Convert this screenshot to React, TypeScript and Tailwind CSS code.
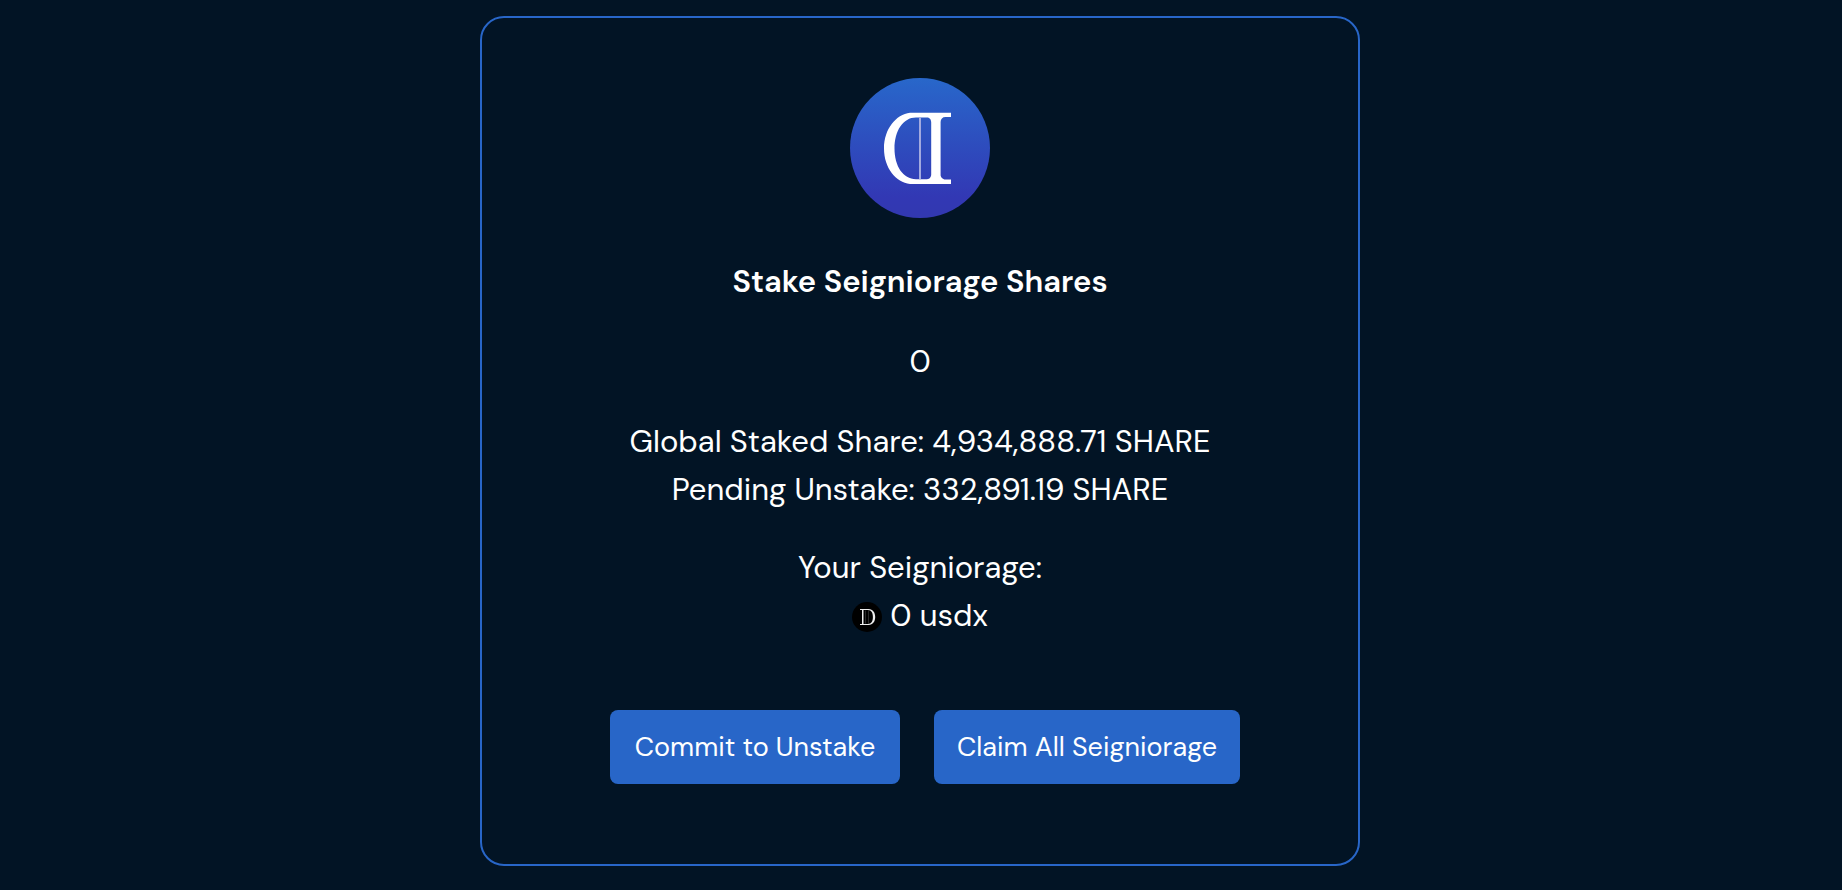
function ShareLogo() {
  return (
    <svg viewBox="0 0 140 140" className="size-[140px]" role="img" aria-label="Share">
      <defs>
        <linearGradient id="share-fill" x1="0" y1="0" x2="0" y2="1">
          <stop offset="0" stopColor="#2867ca" />
          <stop offset="0.85" stopColor="#3238b4" />
          <stop offset="1" stopColor="#3238b0" />
        </linearGradient>
      </defs>
      <circle cx="70" cy="70" r="70" fill="url(#share-fill)" />
      <path
        fill="#fff"
        fillRule="evenodd"
        d="M101 34.8V39H95.500C92.500 39 90.600 41 90.600 44V97C90.600 99 92.500 101.500 95.500 101.500H101V106H60C46 104.500 34 90 34 70.500S46 36.500 60 34.800ZM77 39.500H66C53 39.500 44.500 53 44.500 70.500S53 101.200 66 101.200H77C80 101.200 81.200 98.500 81.200 96.500V44.500C81.200 42 80 39.500 77 39.500Z"
      />
      <path fill="#a3aadf" d="M69 39.500h2v61.700h-2z" />
    </svg>
  );
}

function CoinIcon() {
  return (
    <svg viewBox="0 0 30 30" className="mt-[2px] size-[30px]" aria-hidden="true">
      <circle cx="15" cy="15" r="15" fill="#000" />
      <path stroke="#2a2a2a" d="M13.500 8.500V21.500M16.500 8.500V21.500" />
      <path
        fill="#eee"
        fillRule="evenodd"
        d="M8 7H16.500C21 7 23.200 10.800 23.200 15S21 23 16.500 23H8V21.900H10V8.100H8ZM11.500 8.100V21.900H16C19.500 21.900 20.900 19 20.900 15S19.500 8.100 16 8.100Z"
      />
    </svg>
  );
}

const buttonClass = "h-[74px] rounded-lg bg-[#2866c8] text-[27px] leading-[42px]";

export default function App() {
  return (
    <div className="min-h-screen bg-[#021425] pt-4 pr-[18px] pb-6 pl-4 font-['DM_Sans',Lato,sans-serif] text-[31px] leading-[48px] text-white">
      <main className="mx-auto flex w-full max-w-[880px] flex-col items-center rounded-3xl border-2 border-[#2866c8] px-6 pt-[60px] pb-20 text-center">
        <ShareLogo />
        <h1 className="mt-10 font-semibold">Stake Seigniorage Shares</h1>
        <p className="mt-8">0</p>
        <div className="mt-8">
          <p>Global Staked Share: 4,934,888.71 SHARE</p>
          <p>Pending Unstake: 332,891.19 SHARE</p>
        </div>
        <div className="mt-[30px]">
          <p>Your Seigniorage:</p>
          <p className="flex items-center justify-center gap-2">
            <CoinIcon />
            <span>0 usdx</span>
          </p>
        </div>
        <div className="mt-[70px] flex flex-wrap justify-center gap-[34px] pl-[10px]">
          <button type="button" className={`w-[290px] ${buttonClass}`}>
            Commit to Unstake
          </button>
          <button type="button" className={`w-[306px] ${buttonClass}`}>
            Claim All Seigniorage
          </button>
        </div>
      </main>
    </div>
  );
}
